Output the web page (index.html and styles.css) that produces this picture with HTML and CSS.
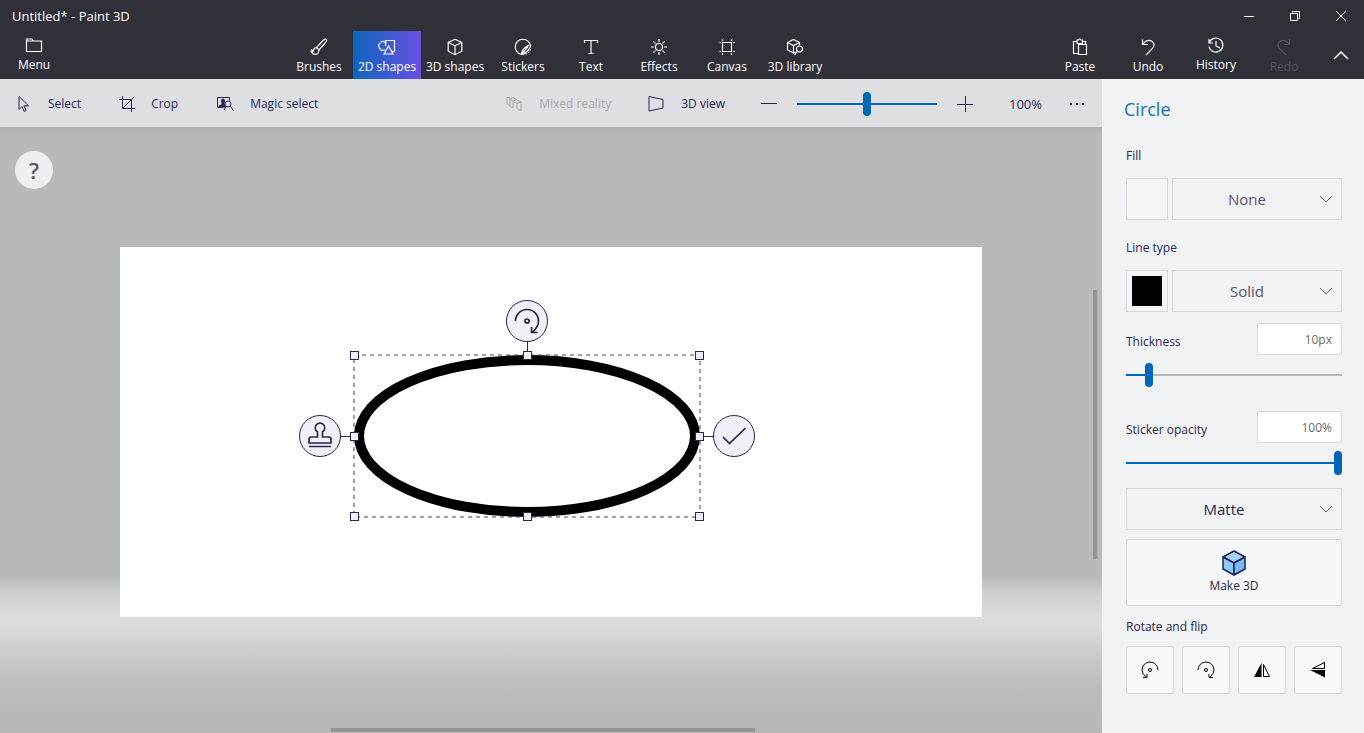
FILE: index.html
```html
<!DOCTYPE html>
<html lang="en">
<head>
    <meta charset="UTF-8">
    <meta name="viewport" content="width=device-width, initial-scale=1.0">
    <title>Untitled* - Paint 3D</title>
    <link rel="stylesheet" href="styles.css">
</head>
<body>
    <header>
        <div class="titlebar">
            <h1>Untitled* - Paint 3D</h1>
            <div class="window-buttons">
                <button aria-label="Minimize"><svg width="12" height="12" viewBox="0 0 12 12"><path d="M1 6.5h10"/></svg></button>
                <button aria-label="Restore"><svg width="12" height="12" viewBox="0 0 12 12"><path d="M1.5 3.5h7v7h-7zM3.500 3.500v-2h7v7h-2"/></svg></button>
                <button aria-label="Close"><svg width="12" height="12" viewBox="0 0 12 12"><path d="M1 1l10 10M11 1L1 11"/></svg></button>
            </div>
        </div>
        <nav class="ribbon">
            <button class="tab raised">
                <svg width="18" height="18" viewBox="0 0 18 18"><path d="M1.500 15.500v-12.500h5.500l1.500 2h8v10.500zM1.500 5h7"/></svg>
                <span>Menu</span>
            </button>
            <div class="tabs">
                <button class="tab">
                    <svg width="18" height="18" viewBox="0 0 18 18"><path d="M6.500 9.500l7.500-8q1.500-1 2.300 0 .7.900-.1 2.200L9 12zM6.500 9.500L9 12M6.300 9.600q-2.600.2-2.600 2.600-.3 1.800-2.500 1.200 1.500 3.200 4.600 2.900 3.200-.4 3-4.300M1 11.500l2 1.500"/></svg>
                    <span>Brushes</span>
                </button>
                <button class="tab active">
                    <svg width="18" height="18" viewBox="0 0 18 18"><path d="M7 11.800a4.300 4.300 0 1 1 1.500-6.500M7.500 8V2.500h9v11h-2.500M10.500 8l4.500 8H6z"/></svg>
                    <span>2D shapes</span>
                </button>
                <button class="tab">
                    <svg width="18" height="18" viewBox="0 0 18 18"><path d="M9 1.300l6.800 3.200v8.700L9 16.700l-6.800-3.500V4.500zM2.200 4.500L9 7.700l6.800-3.200M9 7.700v9"/></svg>
                    <span>3D shapes</span>
                </button>
                <button class="tab">
                    <svg width="18" height="18" viewBox="0 0 18 18"><path d="M7.500 16.500A7.700 7.700 0 1 1 16.600 8M16.600 8q-1.500-1.800-5 1.200Q7 13 7.500 16.500q4-1 6.500-4 2-2.500 2.600-4.500M7.500 16.500L14 8.500"/><path d="M16.500 11q-1 4.500-7 5.800" stroke-dasharray="1.500 1.500"/></svg>
                    <span>Stickers</span>
                </button>
                <button class="tab">
                    <svg width="18" height="18" viewBox="0 0 18 18"><path d="M2.500 5V2.500h13V5M9 2.500v13M6.500 15.500h5"/></svg>
                    <span>Text</span>
                </button>
                <button class="tab">
                    <svg width="18" height="18" viewBox="0 0 18 18"><circle cx="9" cy="9" r="3.500"/><path d="M9 1v3M9 14v3M1 9h3M14 9h3M3.300 3.300l2.100 2.100M12.600 12.600l2.100 2.100M3.300 14.700l2.100-2.100M12.600 5.400l2.100-2.100"/></svg>
                    <span>Effects</span>
                </button>
                <button class="tab">
                    <svg width="18" height="18" viewBox="0 0 18 18"><path d="M4.500 4.500h9v9h-9zM4.500 1v2M13.500 1v2M4.500 15v2M13.500 15v2M1 4.500h2M15 4.500h2M1 13.500h2M15 13.500h2"/></svg>
                    <span>Canvas</span>
                </button>
                <button class="tab">
                    <svg width="18" height="18" viewBox="0 0 18 18"><path d="M7.500 15L1.500 12V4.500l6-3 6 3v3M1.500 4.500l6 3 6-3M7.500 7.500V15l2-1"/><circle cx="13.500" cy="11" r="3"/><path d="M11.400 13.200L8.500 17"/></svg>
                    <span>3D library</span>
                </button>
            </div>
            <div class="tabs">
                <button class="tab">
                    <svg width="18" height="18" viewBox="0 0 18 18"><path d="M7.500 15.500h-5v-12h3.500v-1.500h1.500q1-2 2.500 0h1.500v1.500h3v3M6 3.500v2h5.500v-2M7.500 6.500h8v10h-8z"/></svg>
                    <span>Paste</span>
                </button>
                <button class="tab">
                    <svg width="18" height="18" viewBox="0 0 18 18"><path d="M3.500 1v5.500H9M3.500 6.500Q8 .8 12.500 3q4.500 3 1.200 7.200L7 17"/></svg>
                    <span>Undo</span>
                </button>
                <button class="tab raised">
                    <svg width="18" height="18" viewBox="0 0 18 18"><path d="M2 3v4h4M2.200 7A7 7 0 1 1 2 10.500M9 5v5l4 2"/></svg>
                    <span>History</span>
                </button>
                <button class="tab" disabled>
                    <svg width="18" height="18" viewBox="0 0 18 18"><path d="M14.500 1v5.500H9M14.500 6.500Q10 .8 5.500 3 1 6 4.300 10.200L11 17"/></svg>
                    <span>Redo</span>
                </button>
                <button class="collapse" aria-label="Collapse ribbon"><svg width="18" height="10" viewBox="0 0 18 10"><path d="M2 9l7-7 7 7"/></svg></button>
            </div>
        </nav>
    </header>

    <main>
        <section class="editor">
            <div class="toolbar">
                <div class="tools">
                    <button class="tool">
                        <svg width="16" height="18" viewBox="0 0 16 18"><path d="M3 1.500v13l3-3 2.200 5 2-1L8 10.800h4.500z"/></svg>
                        Select
                    </button>
                    <button class="tool">
                        <svg width="16" height="18" viewBox="0 0 16 18"><path d="M3.500 1v12.500H16M0 4.500h12.500V17M4 13L15 2"/></svg>
                        Crop
                    </button>
                    <button class="tool">
                        <svg width="18" height="18" viewBox="0 0 18 18"><path d="M7 12.500H1.500v-10h12v3"/><path class="solid" d="M2 12.500q1-3 3.500-3.300L5 6q0-2.500 2-2.500T9 6L8.500 9l2 3.500z"/><circle cx="12" cy="9" r="3"/><path d="M14 11l3.500 4.500M10 11.500L8 15"/></svg>
                        Magic select
                    </button>
                </div>
                <div class="view-tools">
                    <button class="tool" disabled>
                        <svg width="18" height="18" viewBox="0 0 18 18"><path d="M2 8.500V2l4 1.500M2 8.500L5 11M5 4l3-1.500 3 2M5 4v7.500l3 1.500V6.500zM8 6.500l3-2 5 2.500v9l-4-2.500V8.500zM12 8.500L16 7"/></svg>
                        Mixed reality
                    </button>
                    <button class="tool">
                        <svg width="18" height="18" viewBox="0 0 18 18"><path d="M2 1.500l14 3v8.500l-14 3z"/></svg>
                        3D view
                    </button>
                    <div class="zoom">
                        <button aria-label="Zoom out"><svg width="16" height="16" viewBox="0 0 16 16"><path d="M0 7.500h16"/></svg></button>
                        <input type="range" aria-label="Zoom" value="50">
                        <button aria-label="Zoom in"><svg width="16" height="16" viewBox="0 0 16 16"><path d="M0 8.500h16M8.500 0v16"/></svg></button>
                    </div>
                    <div class="zoom-level">
                        <output>100%</output>
                        <button aria-label="More options"><svg width="18" height="4" viewBox="0 0 18 4"><path class="solid" d="M2 1h2v2H2zM8 1h2v2H8zM14 1h2v2h-2z"/></svg></button>
                    </div>
                </div>
            </div>
            <div class="workspace">
                <button class="help" aria-label="Help">?</button>
                <div class="canvas">
                    <div class="selection">
                        <svg class="shape" width="346" height="162" viewBox="0 0 346 162">
                            <ellipse cx="173" cy="81" rx="168" ry="76"/>
                            <rect x="0" y="0" width="346" height="162"/>
                            <path d="M173.500-14V0M-14 81.500H0M346 81.500h14"/>
                        </svg>
                        <i class="handle top left"></i>
                        <i class="handle top center"></i>
                        <i class="handle top right"></i>
                        <i class="handle middle left"></i>
                        <i class="handle middle right"></i>
                        <i class="handle bottom left"></i>
                        <i class="handle bottom center"></i>
                        <i class="handle bottom right"></i>
                        <button class="action rotate" aria-label="Rotate"><svg width="30" height="30" viewBox="0 0 30 30"><path d="M3.500 15A11.500 11.500 0 0 1 26.500 15q0 6-6 11M19.500 21v5.500h6"/><circle cx="15" cy="15" r="2"/></svg></button>
                        <button class="action stamp" aria-label="Stamp"><svg width="30" height="30" viewBox="0 0 30 30"><path d="M4 22v-4q0-2 2-2h6.500v-5a4.800 4.800 0 1 1 5 0v5H24q2 0 2 2v4zM4 25.500h22"/></svg></button>
                        <button class="action commit" aria-label="Commit"><svg width="30" height="30" viewBox="0 0 30 30"><path d="M4 16l6.500 6.500L26.500 7"/></svg></button>
                    </div>
                </div>
                <div class="scroll vertical"></div>
                <div class="scroll horizontal"></div>
            </div>
        </section>

        <aside class="panel">
            <h2>Circle</h2>
            <label for="fill">Fill</label>
            <div class="row">
                <button class="swatch" aria-label="Fill color"></button>
                <div class="dropdown">
                    <select id="fill"><option>None</option><option>Solid</option></select>
                    <svg width="14" height="8" viewBox="0 0 14 8"><path d="M1 1l6 6 6-6"/></svg>
                </div>
            </div>
            <label for="line-type">Line type</label>
            <div class="row">
                <button class="swatch" aria-label="Line color"><span></span></button>
                <div class="dropdown">
                    <select id="line-type"><option>Solid</option><option>None</option></select>
                    <svg width="14" height="8" viewBox="0 0 14 8"><path d="M1 1l6 6 6-6"/></svg>
                </div>
            </div>
            <div class="setting">
                <label for="thickness">Thickness</label>
                <input type="text" id="thickness" value="10px">
                <input type="range" aria-label="Thickness" value="9" style="--fill: 9%">
            </div>
            <div class="setting">
                <label for="opacity">Sticker opacity</label>
                <input type="text" id="opacity" value="100%">
                <input type="range" aria-label="Sticker opacity" value="100" style="--fill: 100%">
            </div>
            <div class="dropdown dark">
                <select aria-label="Material"><option>Matte</option><option>Gloss</option></select>
                <svg width="14" height="8" viewBox="0 0 14 8"><path d="M1 1l6 6 6-6"/></svg>
            </div>
            <button class="make-3d">
                <svg width="26" height="28" viewBox="0 0 26 28">
                    <path fill="#a5d3fc" d="M13 2l11 6-11 6L2 8z"/>
                    <path fill="#8ec8fb" d="M2 8l11 6v12L2 20z"/>
                    <path fill="#79b8f5" d="M24 8l-11 6v12l11-6z"/>
                </svg>
                Make 3D
            </button>
            <h3>Rotate and flip</h3>
            <div class="flips">
                <button aria-label="Rotate left"><svg width="18" height="18" viewBox="0 0 18 18"><path d="M17 9A8 8 0 0 0 1 9q0 3.500 4 7M2 16.500h4V13"/><circle cx="9" cy="9" r="1.500"/></svg></button>
                <button aria-label="Rotate right"><svg width="18" height="18" viewBox="0 0 18 18"><path d="M1 9A8 8 0 0 1 17 9q0 3.500-4 7M16 16.500h-4V13"/><circle cx="9" cy="9" r="1.500"/></svg></button>
                <button aria-label="Flip horizontal"><svg width="18" height="18" viewBox="0 0 18 18"><path class="solid" d="M8.500 2v14H1z"/><path d="M10.500 3.500v12h6z"/></svg></button>
                <button aria-label="Flip vertical"><svg width="18" height="18" viewBox="0 0 18 18"><path d="M15.500 1.500v6H3.500z"/><path class="solid" d="M1 9h15v7.500z"/></svg></button>
            </div>
        </aside>
    </main>
</body>
</html>
```
FILE: styles.css
```css
:root {
    --dark: #2f3038;
    --bar: #dedfe2;
    --panel: #f1f2f4;
    --ink: #29264f;
    --blue: #0067b8;
    --border: #d5d7da;
}

* {
    margin: 0;
    padding: 0;
    box-sizing: border-box;
    font-family: "Open Sans", "Noto Sans", sans-serif;
}

body {
    display: flex;
    flex-direction: column;
    height: 100vh;
    overflow: hidden;
    font-size: 12px;
    line-height: 16px;
    color: var(--ink);
}

button {
    background: none;
    border: none;
    color: inherit;
    font-size: 12px;
    line-height: 16px;
}

svg {
    fill: none;
    stroke: currentColor;
    display: block;
    flex-shrink: 0;
}

.solid {
    fill: currentColor;
    stroke: none;
}

header {
    background: var(--dark);
    color: white;
}

.titlebar {
    display: flex;
    justify-content: space-between;
    height: 31px;
}

h1 {
    padding: 8px 12px;
    font-size: 13px;
    font-weight: normal;
    line-height: 16px;
}

.window-buttons {
    display: flex;
}

.window-buttons button {
    display: grid;
    place-items: center;
    width: 46px;
}

.ribbon {
    display: flex;
    justify-content: space-between;
    height: 48px;
}

.tabs {
    display: flex;
}

.tab {
    display: flex;
    flex-direction: column;
    align-items: center;
    gap: 3px;
    width: 68px;
    padding-top: 7px;
    white-space: nowrap;
}

.tab svg {
    stroke-width: 1.2;
}

.tab.raised {
    padding-top: 5px;
}

.tab.active {
    background: linear-gradient(to right, #0b66bd, #6a50e0);
}

.tab:disabled {
    color: #54555d;
}

.collapse {
    display: grid;
    place-items: center;
    width: 46px;
}

.collapse svg {
    stroke-width: 1.5;
}

main {
    display: flex;
    flex: 1;
    min-height: 0;
}

.editor {
    display: flex;
    flex-direction: column;
    flex: 1;
}

.toolbar {
    display: flex;
    justify-content: space-between;
    height: 48px;
    padding: 2px 16px 0;
    background: var(--bar);
}

.tools,
.view-tools,
.zoom,
.zoom-level,
.tool {
    display: flex;
    align-items: center;
}

.tools {
    gap: 38px;
}

.view-tools {
    gap: 36px;
}

.zoom {
    gap: 20px;
}

.zoom-level {
    gap: 26px;
}

.tool {
    gap: 16px;
}

.tool:disabled {
    color: #a6a7ab;
}

output {
    font-size: 13px;
}

/* sliders */
input[type="range"] {
    appearance: none;
    width: 100%;
    height: 24px;
    background: linear-gradient(var(--blue), var(--blue)) left center / var(--fill) 2px no-repeat,
        linear-gradient(#b5b7b9, #b5b7b9) center / 100% 2px no-repeat;
}

.zoom input[type="range"] {
    width: 140px;
    background: linear-gradient(var(--blue), var(--blue)) center / 100% 2px no-repeat;
}

input[type="range"]::-webkit-slider-thumb {
    appearance: none;
    width: 8px;
    height: 24px;
    border-radius: 4px;
    background: var(--blue);
}

/* drawing area */
.workspace {
    position: relative;
    flex: 1;
    display: flex;
    padding: 120px 120px 116px;
    background: linear-gradient(#b0b2b1 0, #b8bab9 8px, #b8bab9 74%, #cfd0d0 77%, #dcdcdc 81%, #dadada 83%, #c6c8c7 88%, #babcbb 93%, #b7b9b8 100%);
}

.help {
    position: absolute;
    top: 24px;
    left: 15px;
    width: 38px;
    height: 38px;
    border-radius: 50%;
    background: #efefef;
    color: #5a5a5a;
    font-size: 22px;
    font-weight: 600;
}

.canvas {
    position: relative;
    flex: 1;
    background: white;
}

.selection {
    position: absolute;
    top: 108px;
    left: 234px;
    width: 346px;
    height: 162px;
}

.shape {
    overflow: visible;
}

.shape ellipse {
    stroke: black;
    stroke-width: 10;
}

.shape rect {
    stroke: #44444c;
    stroke-dasharray: 4 4;
}

.handle {
    position: absolute;
    width: 9px;
    height: 9px;
    border: 1px solid var(--ink);
    background: #f0f0f8;
}

.handle.top { top: -4px; }
.handle.middle { top: 77px; }
.handle.bottom { bottom: -4px; }
.handle.left { left: -4px; }
.handle.center { left: 169px; }
.handle.right { right: -4px; }

.action {
    position: absolute;
    display: grid;
    place-items: center;
    width: 42px;
    height: 42px;
    border: 1px solid var(--ink);
    border-radius: 50%;
    background: #f0f0f8;
}

.action svg {
    stroke-width: 1.7;
}

.rotate {
    top: -55px;
    left: 152px;
}

.stamp {
    top: 60px;
    left: -55px;
}

.commit {
    top: 60px;
    right: -55px;
}

.scroll {
    position: absolute;
    background: #929594;
}

.scroll.vertical {
    top: 163px;
    right: 5px;
    width: 4px;
    height: 269px;
}

.scroll.horizontal {
    bottom: 1px;
    left: 331px;
    width: 424px;
    height: 4px;
}

/* shape settings */
.panel {
    display: flex;
    flex-direction: column;
    width: 262px;
    padding: 18px 22px 0 24px;
    background: var(--panel);
}

h2 {
    margin: 0 0 27px -2px;
    color: #1a6fb5;
    font-size: 18px;
    font-weight: normal;
    line-height: 24px;
}

.row {
    display: flex;
    gap: 4px;
    margin: 14px 0 20px;
}

.swatch {
    display: grid;
    place-items: center;
    width: 42px;
    height: 42px;
    border: 1px solid var(--border);
    background: #f4f5f5;
}

.swatch span {
    width: 30px;
    height: 30px;
    background: black;
}

.dropdown {
    position: relative;
    flex: 1;
    color: #56546f;
}

.dropdown.dark {
    flex: none;
    margin-top: 13px;
    color: var(--ink);
}

.dropdown select {
    appearance: none;
    width: 100%;
    height: 42px;
    padding-right: 20px;
    border: 1px solid var(--border);
    background: #f1f2f4;
    color: inherit;
    font-size: 15px;
    text-align-last: center;
}

.dropdown svg {
    position: absolute;
    top: 17px;
    right: 9px;
    color: #66666f;
    pointer-events: none;
}

.setting {
    display: grid;
    grid-template-columns: 1fr 85px;
    align-items: center;
    row-gap: 8px;
}

.row + .setting {
    margin-top: -9px;
}

.setting + .setting {
    margin-top: 24px;
}

.setting label {
    padding-top: 6px;
}

.setting input[type="text"] {
    width: 100%;
    height: 32px;
    padding: 0 9px;
    border: 1px solid var(--border);
    background: white;
    color: #6b6b70;
    font-size: 12px;
    text-align: right;
}

.setting input[type="range"] {
    grid-column: 1 / -1;
}

.make-3d {
    display: flex;
    flex-direction: column;
    align-items: center;
    gap: 1px;
    height: 67px;
    margin: 9px 0 13px;
    padding-top: 9px;
    border: 1px solid var(--border);
    border-radius: 2px;
    background: #f6f7f9;
}

.make-3d svg {
    stroke: #1e2258;
    stroke-width: 1.5;
    stroke-linejoin: round;
}

h3 {
    margin-bottom: 11px;
    font-size: 12px;
    font-weight: normal;
}

.flips {
    display: grid;
    grid-template-columns: repeat(4, 1fr);
    gap: 8px;
}

.flips button {
    display: grid;
    place-items: center;
    height: 48px;
    border: 1px solid var(--border);
    border-radius: 2px;
    background: #f7f8fa;
    color: black;
}
```
